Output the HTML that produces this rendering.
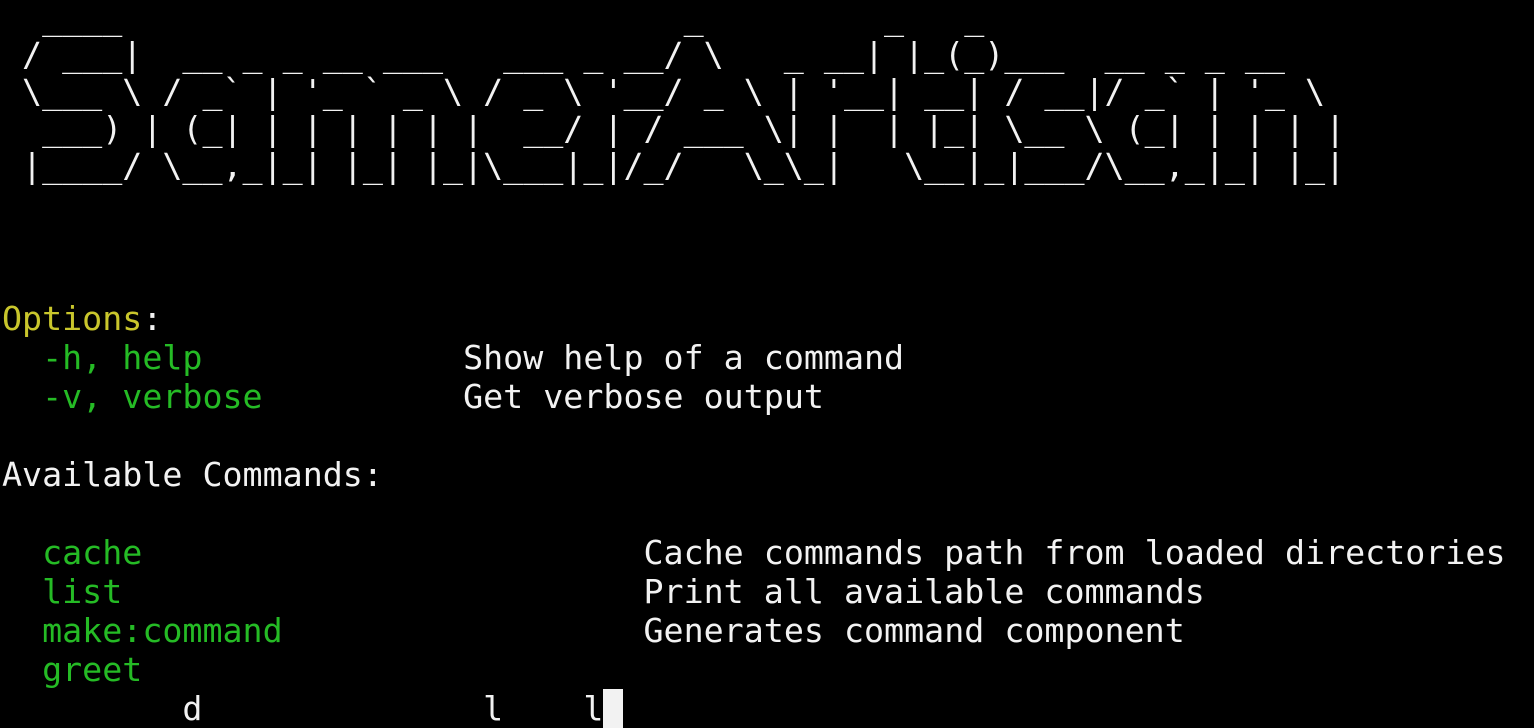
<!DOCTYPE html>
<html><head><meta charset="utf-8"><style>
html,body{margin:0;padding:0;background:#000;width:1534px;height:695px;overflow:hidden}
pre{position:absolute;left:2px;margin:0;font-family:"DejaVu Sans Mono","Liberation Mono",monospace;font-size:33.3px;color:#f2f2f2;white-space:pre}
#art{top:-1px;line-height:37px}
#txt{top:-13px;line-height:39px}
.y{color:#c9c62c}.g{color:#25bb25}
.cur{background:#f2f2f2}
</style></head><body>
<pre id="art">  ____                            _         _   _
 / ___|  __ _ _ __ ___   ___ _ __/ \   _ __| |_(_)___  __ _ _ __
 \___ \ / _` | '_ ` _ \ / _ \ '__/ _ \ | '__| __| / __|/ _` | '_ \
  ___) | (_| | | | | | |  __/ | / ___ \| |  | |_| \__ \ (_| | | | |
 |____/ \__,_|_| |_| |_|\___|_|/_/   \_\_|   \__|_|___/\__,_|_| |_|</pre>
<pre id="txt">








<span class="y">Options</span>:
  <span class="g">-h, help</span>             Show help of a command
  <span class="g">-v, verbose</span>          Get verbose output

Available Commands:

  <span class="g">cache</span>                         Cache commands path from loaded directories
  <span class="g">list</span>                          Print all available commands
  <span class="g">make:command</span>                  Generates command component
  <span class="g">greet</span>
         d              l    l<span class="cur"> </span>
</pre>
</body></html>
